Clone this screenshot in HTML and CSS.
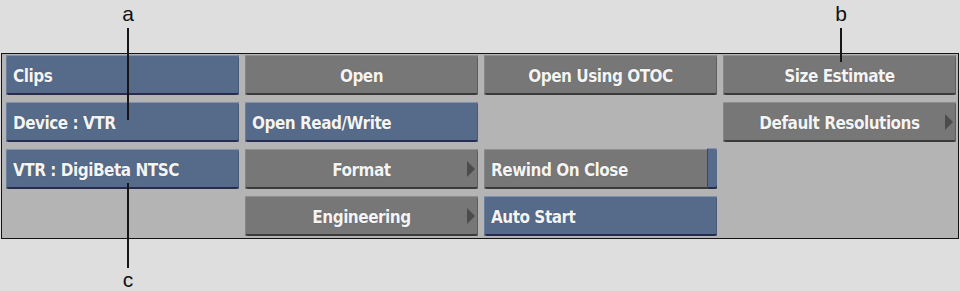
FILE: index.html
```html
<!DOCTYPE html>
<html lang="en">

<head>
    <meta charset="UTF-8">
    <title>VTR Clip Menu</title>
    <link rel="stylesheet" href="styles.css">
</head>

<body>
    <div class="page">
        <div class="panel">
            <div class="btn blue">Clips</div>
            <div class="btn gray center">Open</div>
            <div class="btn gray center">Open Using OTOC</div>
            <div class="btn gray center">Size Estimate</div>

            <div class="btn blue">Device : VTR</div>
            <div class="btn blue">Open Read/Write</div>
            <div class="cell"></div>
            <div class="btn gray center arrow">Default Resolutions</div>

            <div class="btn blue">VTR : DigiBeta NTSC</div>
            <div class="btn gray center arrow">Format</div>
            <div class="btn gray toggle">Rewind On Close<span class="flag"></span></div>
            <div class="cell"></div>

            <div class="cell"></div>
            <div class="btn gray center arrow">Engineering</div>
            <div class="btn blue">Auto Start</div>
            <div class="cell"></div>
        </div>

        <!-- callouts -->
        <div class="callout callout-a">
            <span class="letter">a</span>
            <span class="line"></span>
        </div>
        <div class="callout callout-b">
            <span class="letter">b</span>
            <span class="line"></span>
        </div>
        <div class="callout callout-c">
            <span class="line"></span>
            <span class="letter">c</span>
        </div>
    </div>
</body>

</html>
```

FILE: styles.css
```css
body {
    margin: 0;
    background: #dedede;
    font-family: "Liberation Sans", Arial, sans-serif;
}

.page {
    position: relative;
    width: 960px;
    height: 291px;
    padding-top: 53px;
    box-sizing: border-box;
}

.panel {
    margin: 0 1px 0 1px;
    border: 1px solid #141414;
    background: #b4b4b4;
    padding: 1px 2px 2px 4px;
    display: grid;
    grid-template-columns: repeat(4, 233px);
    grid-template-rows: repeat(4, 40px);
    column-gap: 6px;
    row-gap: 7px;
}

.btn {
    position: relative;
    display: flex;
    align-items: center;
    padding: 1px 7px 0 7px;
    border-radius: 2px;
    color: #f4f4f4;
    font-family: "DejaVu Sans Condensed", "DejaVu Sans", sans-serif;
    font-stretch: condensed;
    font-weight: bold;
    font-size: 17px;
    letter-spacing: -0.5px;
    white-space: nowrap;
    text-shadow: 0 0 1px rgba(0, 0, 0, 0.35);
}

.blue {
    background: #566a8a;
    box-shadow: inset 0 1px #8192b0, inset 1px 0 #6a7d9c, inset -1px 0 #465978, inset 0 -2px #282a50;
}

.gray {
    background: #777777;
    box-shadow: inset 0 1px #8f8f8f, inset 1px 0 #858585, inset -1px 0 #5e5e5e, inset 0 -2px #3a3a3a;
}

.center {
    justify-content: center;
}

.arrow::after {
    content: "";
    position: absolute;
    right: 3px;
    top: 12px;
    border-left: 8px solid #4c4c4c;
    border-top: 8px solid transparent;
    border-bottom: 8px solid transparent;
}

.toggle {
    padding-right: 18px;
    box-shadow: inset 0 1px #8f8f8f, inset 1px 0 #858585, inset 0 -2px #3a3a3a;
}

.flag {
    position: absolute;
    right: 0;
    top: -1px;
    bottom: 0;
    width: 10px;
    border-radius: 0 2px 2px 0;
    background: #566a8a;
    box-shadow: inset 0 1px #8192b0, inset 1px 0 #454545, inset 0 -2px #282a50;
}

.callout {
    position: absolute;
    display: flex;
    flex-direction: column;
    align-items: center;
    width: 24px;
}

.letter {
    font-size: 21px;
    line-height: 20px;
    color: #111111;
}

.line {
    width: 2px;
    background: #161616;
}

.callout-a {
    left: 116px;
    top: 4px;
}

.callout-a .line {
    height: 92px;
    margin-top: 4px;
}

.callout-b {
    left: 829px;
    top: 4px;
}

.callout-b .line {
    height: 34px;
    margin-top: 4px;
}

.callout-c {
    left: 116px;
    top: 183px;
}

.callout-c .line {
    height: 85px;
    margin-bottom: 2px;
}
```
